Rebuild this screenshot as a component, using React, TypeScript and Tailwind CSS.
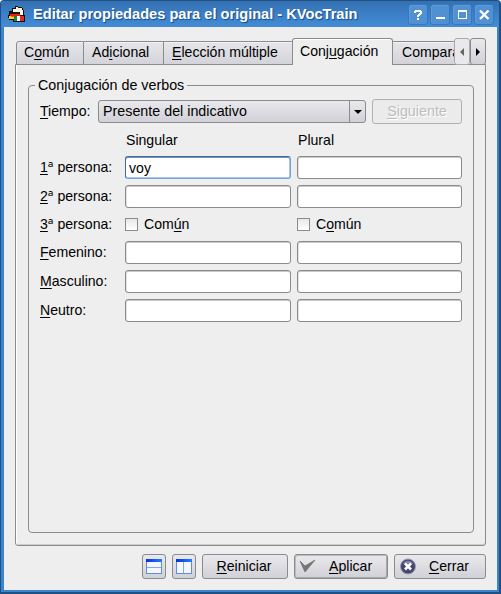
import type { ReactNode } from 'react';

const raised = 'rounded-[3px] border border-[#8b8b8e] bg-gradient-to-b from-[#e9e9ed] to-[#d0d0d7]';

function Key({ children }: { children: ReactNode }) {
  return <span className="underline decoration-1 underline-offset-[1.5px] [text-decoration-skip-ink:none]">{children}</span>;
}

function Ordinal() {
  return <span className="align-[-2px] font-['Open_Sans',sans-serif] text-[16px] leading-none">ª</span>;
}

function TitleButton({ children }: { children: ReactNode }) {
  return (
    <div className="flex h-[21px] w-5 items-center justify-center rounded-[3px] border border-[#3478bf] bg-[#5191d3] shadow-[inset_1px_1px_0_#5f9bd8]">
      <svg width="18" height="19" viewBox="0 0 18 19" fill="#fff" shapeRendering="crispEdges">
        {children}
      </svg>
    </div>
  );
}

function AppIcon() {
  return (
    <svg width="17" height="17" viewBox="0 0 17 17" shapeRendering="crispEdges">
      <path d="M7 0h3v1h4v1h1v2h1v5h1v7H5v-2H1v-2H0V9h1V5h3V2h3z" fill="#111" />
      <path d="M5 3h3V1h2v1h4v2h1v5h-3V6H5z" fill="#fff8dc" />
      <path d="M2 6h10v2H2z" fill="#1c1408" />
      <path d="M2 8h10v2H2z" fill="#f01c10" />
      <path d="M1 10h5v3H1z" fill="#ffd028" />
      <path d="M3 10h3v1H3z" fill="#f06018" />
      <path d="M6 10h3v5H6z" fill="#11883a" />
      <path d="M9 10h3v5H9z" fill="#fff" />
      <path d="M12 10h4v5h-4z" fill="#e12a2a" />
    </svg>
  );
}

function Tab({ width, pad, children }: { width: string; pad: string; children: ReactNode }) {
  return (
    <div className={`${width} ${pad} mt-[3px] h-6 shrink-0 overflow-hidden border-y border-r border-[#8b8b8e] bg-gradient-to-b from-[#e6e6ea] to-[#d3d3da] leading-[21px] shadow-[inset_0_1px_0_#f2f2f5]`}>
      {children}
    </div>
  );
}

function Field({ value = '', focused = false }: { value?: string; focused?: boolean }) {
  const edge = focused
    ? 'border-t-[#426b9b] border-l-[#426b9b] border-r-[#76a4d6] border-b-[#76a4d6] shadow-[inset_0_1px_0_#7194b9,inset_0_-1px_0_#a4c6ec,inset_-1px_0_0_#a4c6ec]'
    : 'border-[#8b8b8b] shadow-[inset_0_1px_0_#c9c9c9,inset_1px_0_0_#e2e2e2]';
  return <input readOnly value={value} className={`${edge} block h-[23px] w-full min-w-0 rounded-[3px] border bg-white pt-px pl-[3px] outline-none`} />;
}

function Check({ children }: { children: ReactNode }) {
  return (
    <div className="flex h-[19px] items-center">
      <span className="mr-[6px] h-[13px] w-[13px] border border-[#8b8b8e] bg-gradient-to-b from-[#e8e8e8] to-white" />
      <span>{children}</span>
    </div>
  );
}

function Row({ label, gap, children }: { label: ReactNode; gap: string; children: ReactNode }) {
  return (
    <div className={`${gap} grid grid-cols-[79px_166px_165px] items-center gap-x-[6px]`}>
      <div className="-mr-[6px] h-[19px] leading-[19px] whitespace-nowrap">{label}</div>
      {children}
    </div>
  );
}

function SplitIcon({ vertical = false }: { vertical?: boolean }) {
  return (
    <svg width="16" height="15" viewBox="0 0 16 15" shapeRendering="crispEdges">
      <defs>
        <linearGradient id="bar">
          <stop offset="0" stopColor="#0a30e0" />
          <stop offset="1" stopColor="#2080ff" />
        </linearGradient>
      </defs>
      <path d="M.5 .5h15v14H.5z" fill="#f4f5ff" stroke="#5f8fdc" />
      <path d="M0 0h16v3H0z" fill="url(#bar)" />
      <path d={vertical ? 'M7 3h1v11H7z' : 'M1 8h14v1H1z'} fill="#7eaaf0" />
    </svg>
  );
}

export default function App() {
  return (
    <div className="flex h-[594px] w-[501px] flex-col overflow-hidden rounded-t-[4px] border-t border-r-2 border-b-2 border-l border-[#1f5083] bg-[#3c84ce] pr-[2px] pb-[2px] pl-[3px] font-['Liberation_Sans',Arial,sans-serif] text-[14.1px] text-black">
      <div className="-mr-[2px] -ml-[3px] flex h-[26px] shrink-0 items-center bg-gradient-to-b from-[#3470b0] via-[#3b7fc7] to-[#438cd6] pt-px pr-[5px] pl-[7px]">
        <AppIcon />
        <div className="ml-[8px] grow text-[14.62px] font-bold whitespace-nowrap text-white [text-shadow:1px_1px_1px_#174b82]">Editar propiedades para el original - KVocTrain</div>
        <div className="flex gap-[2px]">
          <TitleButton><path d="M6 5h6v1h1v3h-1v1h-1v1h-1v1H8v-2h1V9h1V8h1V7H7v1H5V6h1zM8 13h2v2H8z" /></TitleButton>
          <TitleButton><path d="M5 12h9v2H5z" /></TitleButton>
          <TitleButton><path d="M5 5h9v9H5zM6 7v6h7V7z" fillRule="evenodd" /></TitleButton>
          <TitleButton><path d="M5 5.500l8.500 8.500M13.500 5.500l-8.500 8.500" shapeRendering="auto" stroke="#fff" strokeWidth="2.300" /></TitleButton>
        </div>
      </div>

      <div className="flex grow flex-col bg-[#eee] px-[11px] pt-[11px]">
        <div className="relative z-10 flex h-[27px] shrink-0">
          <div className="ml-px flex w-[438px] overflow-hidden">
            <Tab width="w-[68px] rounded-tl-[3px] border-l" pad="pl-[7px]">C<Key>o</Key>mún</Tab>
            <Tab width="w-[80px]" pad="pl-[8px]">Ad<Key>i</Key>cional</Tab>
            <Tab width="w-[129px]" pad="pl-[8px]"><Key>E</Key>lección múltiple</Tab>
            <div className="-ml-px h-[27px] w-[101px] shrink-0 rounded-t-[3px] border border-b-0 border-[#8b8b8e] bg-[#eee] pt-[3px] pl-[7px] leading-[19px] shadow-[inset_0_1px_0_#fff]">Conj<Key>u</Key>gación</div>
            <Tab width="w-[90px]" pad="pl-[9px]">Compara</Tab>
          </div>
          <div className="flex h-[27px] w-4 items-center justify-center rounded-[3px] border border-[#aaaaac] bg-[#e9e9eb]"><svg width="4" height="8"><path d="M4 0v8L0 4z" fill="#666" /></svg></div>
          <div className={`${raised} flex h-[27px] w-4 items-center justify-center`}><svg width="4" height="8"><path d="M0 0v8l4-4z" fill="#000" /></svg></div>
        </div>

        <div className="-mt-px h-[482px] shrink-0 rounded-b-[3px] border border-[#8b8b8e] px-[12px] pt-[12px] shadow-[inset_1px_0_0_#fff,inset_0_-1px_0_#ccc]">
          <fieldset className="h-[456px] w-[445px] rounded-[4px] border border-[#8b8b8b] px-[11px]">
            <legend className="-ml-[5px] h-4 px-[3px] text-[14.3px] leading-[16px] whitespace-nowrap">Conjugación de verbos</legend>
            <div className="mt-[6px] flex h-[25px] items-center">
              <div className="w-[58px] shrink-0"><Key>T</Key>iempo:</div>
              <div className={`${raised} flex h-[23px] w-[268px] shrink-0`}>
                <div className="grow pl-[4px] text-[14.3px] leading-[21px]">Presente del indicativo</div>
                <div className="flex w-4 items-center justify-center border-l border-[#8b8b8e]"><svg width="8" height="4"><path d="M0 0h8L4 4z" /></svg></div>
              </div>
              <div className="ml-[6px] h-[25px] w-[90px] rounded-[3px] border border-[#b0b0b0] bg-[#ebebeb] text-center text-[14.3px] leading-[23px] text-[#bdbdbd] [text-shadow:1px_1px_0_#fff]"><Key>S</Key>iguiente</div>
            </div>
            <div className="mt-[6px] grid h-5 grid-cols-[86px_172px_1fr] leading-5"><span /><span>Singular</span><span>Plural</span></div>
            <Row gap="mt-[6px]" label={<><Key>1</Key><Ordinal /> persona:</>}><Field value="voy" focused /><Field /></Row>
            <Row gap="mt-[6px]" label={<><Key>2</Key><Ordinal /> persona:</>}><Field /><Field /></Row>
            <Row gap="mt-[7px]" label={<><Key>3</Key><Ordinal /> persona:</>}><Check>Com<Key>ú</Key>n</Check><Check>C<Key>o</Key>mún</Check></Row>
            <Row gap="mt-[7px]" label={<><Key>F</Key>emenino:</>}><Field /><Field /></Row>
            <Row gap="mt-[6px]" label={<><Key>M</Key>asculino:</>}><Field /><Field /></Row>
            <Row gap="mt-[6px]" label={<><Key>N</Key>eutro:</>}><Field /><Field /></Row>
          </fieldset>
        </div>

        <div className="mt-2 flex justify-end leading-[23px]">
          <div className={`${raised} mr-[6px] flex h-[25px] w-6 items-center justify-center`}><SplitIcon /></div>
          <div className={`${raised} mr-[6px] flex h-[25px] w-6 items-center justify-center`}><SplitIcon vertical /></div>
          <div className={`${raised} mr-[6px] h-[25px] w-[86px] pr-[2px] text-center`}><Key>R</Key>einiciar</div>
          <div className={`${raised} mr-[6px] flex h-[25px] w-[94px] shadow-[inset_-1px_-1px_0_#aaaaad,inset_1px_1px_0_#bcbcbf]`}>
            <svg className="mt-[4px] ml-[4px]" width="17" height="15" viewBox="0 0 17 15"><path d="M1 2l5 5L16 1 6 13z" fill="#777" stroke="#5f5f5f" strokeWidth=".6" /></svg>
            <span className="ml-[13px]"><Key>A</Key>plicar</span>
          </div>
          <div className={`${raised} flex h-[25px] w-[92px]`}>
            <svg className="mt-[3px] ml-[5px]" width="16" height="17" viewBox="0 0 16 17"><circle cx="8" cy="8.5" r="7.5" fill="#45466f" stroke="#9a9aab" /><path d="M3 6a5.5 5.5 0 0 1 10 0z" fill="#8585a3" /><path d="M5 5.5l6 6m0-6l-6 6" stroke="#fff" strokeWidth="2.5" /></svg>
            <span className="ml-[13px]"><Key>C</Key>errar</span>
          </div>
        </div>
      </div>
    </div>
  );
}
